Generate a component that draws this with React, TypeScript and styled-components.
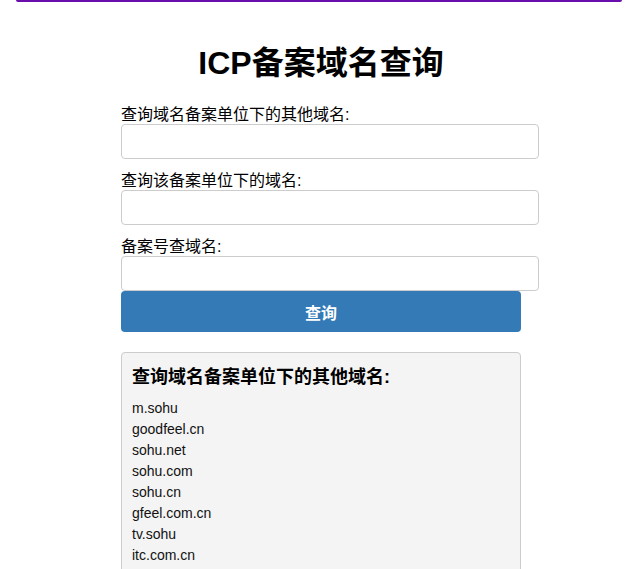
import React from "react";
import styled, { createGlobalStyle } from "styled-components";

const Global = createGlobalStyle`
  html, body { margin: 0; padding: 0; background: #fff; }
  body {
    font-family: "Liberation Sans", Arial, "Noto Sans CJK SC", sans-serif;
    color: #000;
    overflow: hidden;
  }
`;

const Page = styled.div`
  padding-left: 14px;
`;

const TopBar = styled.div`
  height: 2px;
  margin: 0 6px 0 2px;
  background: #6a0dad;
  border-radius: 0 0 4px 4px;
`;

const Container = styled.div`
  width: 400px;
  margin: 0 auto;
`;

const Title = styled.h1`
  margin: 41px 0 23px;
  font-size: 32px;
  line-height: 40px;
  font-weight: 700;
  text-align: center;
`;

const Label = styled.label`
  display: block;
  font-size: 16px;
  line-height: 18px;
`;

const Input = styled.input<{ $last?: boolean }>`
  display: block;
  box-sizing: border-box;
  width: 418px;
  height: 35px;
  margin: 0 0 ${(p) => (p.$last ? "0" : "13px")};
  padding: 8px;
  border: 1px solid #ccc;
  border-radius: 4px;
  font-size: 16px;
  font-family: inherit;
  background: #fff;
`;

const Button = styled.button`
  display: block;
  width: 400px;
  height: 41px;
  border: none;
  border-radius: 4px;
  background: #337ab7;
  color: #fff;
  font-size: 16px;
  font-weight: 700;
  font-family: inherit;
  cursor: pointer;
`;

const Result = styled.div`
  margin-top: 20px;
  padding: 10px;
  border: 1px solid #ccc;
  border-radius: 4px;
  background: #f4f4f4;
`;

const ResultTitle = styled.h3`
  margin: 1px 0 7px;
  font-size: 18px;
  line-height: 27px;
  font-weight: 700;
`;

const List = styled.ul`
  list-style: none;
  margin: 0;
  padding: 0;
`;

const Item = styled.li`
  font-size: 14px;
  line-height: 21px;
  color: #111;
`;

const domains = [
  "m.sohu",
  "goodfeel.cn",
  "sohu.net",
  "sohu.com",
  "sohu.cn",
  "gfeel.com.cn",
  "tv.sohu",
  "itc.com.cn",
];

export default function App() {
  return (
    <>
      <Global />
      <Page>
        <TopBar />
        <Container>
          <Title>ICP备案域名查询</Title>
          <Label htmlFor="q1">查询域名备案单位下的其他域名:</Label>
          <Input id="q1" />
          <Label htmlFor="q2">查询该备案单位下的域名:</Label>
          <Input id="q2" />
          <Label htmlFor="q3">备案号查域名:</Label>
          <Input id="q3" $last />
          <Button>查询</Button>
          <Result>
            <ResultTitle>查询域名备案单位下的其他域名:</ResultTitle>
            <List>
              {domains.map((d) => (
                <Item key={d}>{d}</Item>
              ))}
            </List>
          </Result>
        </Container>
      </Page>
    </>
  );
}
